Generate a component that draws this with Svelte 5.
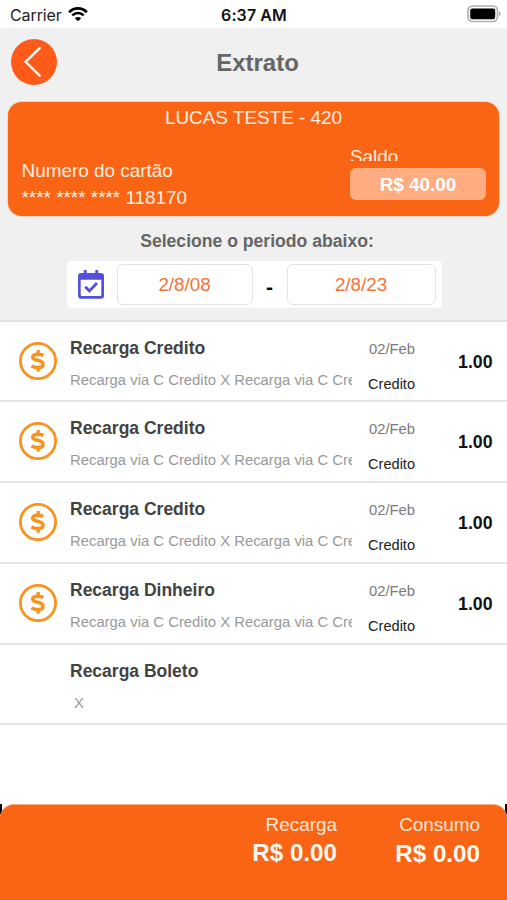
<script>
  const credit = 'Recarga via C Credito X Recarga via C Cre';
  const rows = [
    { title: 'Recarga Credito', detail: credit, date: '02/Feb', kind: 'Credito', value: '1.00' },
    { title: 'Recarga Credito', detail: credit, date: '02/Feb', kind: 'Credito', value: '1.00' },
    { title: 'Recarga Credito', detail: credit, date: '02/Feb', kind: 'Credito', value: '1.00' },
    { title: 'Recarga Dinheiro', detail: credit, date: '02/Feb', kind: 'Credito', value: '1.00' },
    { title: 'Recarga Boleto', detail: 'X' }
  ];
</script>

<div class="screen">
  <div class="status">
    <div class="carrier">
      <span>Carrier</span>
      <svg width="20" height="15" viewBox="0 0 20 15">
        <path d="M1.2 5.2C6.2.2 13.8.2 18.8 5.2" fill="none" stroke="#000" stroke-width="2.7" />
        <path d="M4.3 8.4C7.6 5.2 12.4 5.2 15.7 8.4" fill="none" stroke="#000" stroke-width="2.6" />
        <path d="M10 14.3 6.8 11.2C8.7 9.5 11.3 9.5 13.2 11.2Z" fill="#000" />
      </svg>
    </div>
    <span class="clock">6:37 AM</span>
    <svg class="battery" width="34" height="18" viewBox="0 0 34 18">
      <rect x="1" y="1" width="29.5" height="15.5" rx="4.7" fill="#fff" stroke="#b0b0b0" stroke-width="1.7" />
      <rect x="3.2" y="3.4" width="25" height="10.8" rx="2.2" />
      <path d="M32 6.5q1.7.6 1.7 2.3T32 11.1Z" fill="#aaa" />
    </svg>
  </div>

  <header>
    <div class="title">
      <button aria-label="Voltar">
        <svg width="46" height="46" viewBox="0 0 46 46"><path d="M28.7 9.2 14.6 22.8 28.7 36.7" fill="none" stroke="#fff" stroke-width="2.4" stroke-linecap="round" /></svg>
      </button>
      <h1>Extrato</h1>
    </div>

    <section class="card">
      <div class="holder">LUCAS TESTE - 420</div>
      <div class="cardbody">
        <div class="number">
          <div>Numero do cartão</div>
          <div class="digits">**** **** **** 118170</div>
        </div>
        <div class="balance">
          <div class="label">Saldo</div>
          <div class="amount">R$ 40.00</div>
        </div>
      </div>
    </section>

    <div class="prompt">Selecione o periodo abaixo:</div>
    <div class="period">
      <svg width="26" height="29" viewBox="0 0 26 29">
        <path fill="#5350dc" fill-rule="evenodd" d="M5.8 0h2.9v3h8.6V0h2.9v3h2.4Q26 3 26 6v19.5q0 3.2-3 3.2H3q-3 0-3-3.2V6q0-3 3.3-3h2.5ZM2.7 9.8V25q0 1 1 1h18.6q1 0 1-1V9.8Z" />
        <path d="m7.2 16.7 4.2 4.2 7.6-7.8" fill="none" stroke="#5350dc" stroke-width="2.8" />
      </svg>
      <div class="date from">2/8/08</div>
      <span class="dash">-</span>
      <div class="date to">2/8/23</div>
    </div>
  </header>

  <main>
    {#each rows as row}
      <div class="row">
        <div class="icon">
          {#if row.value}
            <svg width="38" height="38" viewBox="0 0 38 38" fill="none" stroke="#f7931e">
              <circle cx="19" cy="19" r="17.6" stroke-width="2.8" />
              <path d="M24.4 13.4C22.6 12.6 20.8 12.2 18.7 12.2C15.6 12.2 13.7 13.3 13.7 15.2C13.7 17.1 15.6 17.6 18.9 18.3C22.5 19.1 24 20.1 24 22.2C24 24.5 21.9 25.6 18.8 25.6C16.3 25.6 14.2 25 12.4 24" stroke-width="3.6" />
              <path d="M19.2 7.9v4M19.2 25.6v4.2" stroke-width="3.2" />
            </svg>
          {/if}
        </div>
        <div class="info">
          <div class="name">{row.title}</div>
          <div class="detail" class:short={!row.value}>{row.detail}</div>
        </div>
        {#if row.value}
          <div class="meta">
            <div class="day">{row.date}</div>
            <div class="kind">{row.kind}</div>
          </div>
          <div class="value">{row.value}</div>
        {/if}
      </div>
    {/each}
  </main>

  <div class="footwrap">
    <footer>
      <div class="total"><span>Recarga</span><b>R$ 0.00</b></div>
      <div class="total second"><span>Consumo</span><b>R$ 0.00</b></div>
    </footer>
  </div>
</div>

<style>
  :global(body) { margin: 0; background: #fff; }
  .screen, .screen * { box-sizing: border-box; }
  .screen {
    width: 507px; height: 900px; display: flex; flex-direction: column; overflow: hidden;
    background: #fff; font-family: "Liberation Sans", Arial, sans-serif; white-space: nowrap;
  }
  svg { display: block; flex: none; }
  .status {
    height: 28px; flex: none; display: grid; grid-template-columns: 1fr auto 1fr; align-items: center;
    padding: 2px 7px 0 10px; font: 16px/26px Inter, sans-serif; color: #222;
  }
  .carrier { display: flex; align-items: center; gap: 6px; letter-spacing: -.1px; }
  .carrier svg { margin-top: -1px; }
  .clock { font-weight: 600; color: #111; letter-spacing: .1px; margin: -1px 2px 0 0; }
  .battery { justify-self: end; margin-right: -1px; margin-top: -2px; }
  header { height: 293.5px; flex: none; background: #f0f0f0; border-bottom: 2px solid #e1e1e1; }
  .title { height: 74px; display: grid; grid-template-columns: 58px 1fr 50px; padding-top: 11px; }
  button { width: 46px; height: 46px; margin-left: 11px; padding: 0; border: 0; border-radius: 50%; background: #fe5b1b; }
  h1 { margin: 0; text-align: center; font-size: 24px; line-height: 48px; color: #666; }
  .card {
    height: 114px; margin: 0 8px; border-radius: 14px; background: #f96515; color: #ffeee0;
    font-size: 18.9px; box-shadow: 0 0 0 .6px #fbb894;
  }
  .holder { height: 44px; line-height: 32px; text-align: center; }
  .cardbody { display: flex; justify-content: space-between; padding: 0 13px 0 13.5px; }
  .number { padding-top: 11px; line-height: 27px; }
  .digits { margin-top: -.5px; }
  .label { height: 15px; overflow: hidden; line-height: 22px; }
  .amount {
    width: 136px; height: 32px; margin-top: 7px; border-radius: 6px; background: #ffac80;
    color: #fff; font-weight: bold; text-align: center; line-height: 34px;
  }
  .prompt { margin-top: 14px; padding-left: 7px; font-size: 17.6px; font-weight: bold; line-height: 22px; text-align: center; color: #666; }
  .period { width: 375px; height: 47px; margin: 9px 0 0 66.5px; padding-left: 11px; display: flex; align-items: center; background: #fff; border-radius: 4px; }
  .date { height: 41px; border: 1.5px solid #e3e3e3; border-radius: 6px; color: #f27434; font-size: 18.8px; line-height: 40px; text-align: center; }
  .from { width: 136px; margin-left: 13px; }
  .to { width: 149px; }
  .dash { width: 34px; padding-top: 4px; text-align: center; font-size: 21px; font-weight: bold; color: #000; }
  .row { height: 80.75px; display: flex; border-bottom: 2px solid #e4e4e4; }
  .icon { width: 70px; padding: 20px 0 0 19px; flex: none; }
  .info { width: 282px; flex: none; overflow: hidden; padding-top: 16px; }
  .name { font-size: 17.5px; line-height: 20px; font-weight: bold; color: #424242; }
  .detail { margin-top: 13px; font-size: 14.85px; line-height: 18px; color: #999; }
  .short { padding-left: 4px; }
  .meta { width: 80px; flex: none; padding: 18px 0 0 16px; font-size: 14.8px; line-height: 18px; }
  .day { padding-left: 1px; color: #7b7b7b; }
  .kind { margin-top: 17px; color: #222; font-size: 14.6px; }
  .value { flex: 1; padding: 29px 14.5px 0 0; text-align: right; font-size: 17.7px; line-height: 22px; font-weight: bold; color: #111; }
  .footwrap { height: 96px; flex: none; margin-top: auto; background: linear-gradient(90deg, #000 2px, #fff 2px, #fff 505px, #000 505px) 0 0 / 100% 11px no-repeat; }
  footer {
    height: 96px; display: flex; justify-content: flex-end; padding: 8px 27px 0 0; background: #f96515;
    border-radius: 14px 14px 0 0; border-top: 1px solid #fba777;
  }
  .total { width: 143px; display: flex; flex-direction: column; text-align: right; color: #ffe7d8; font-size: 18.9px; line-height: 24px; }
  b { margin-top: 2px; color: #fff8ef; font-size: 24.2px; line-height: 28px; }
  .second b { margin-top: 3px; }
</style>
